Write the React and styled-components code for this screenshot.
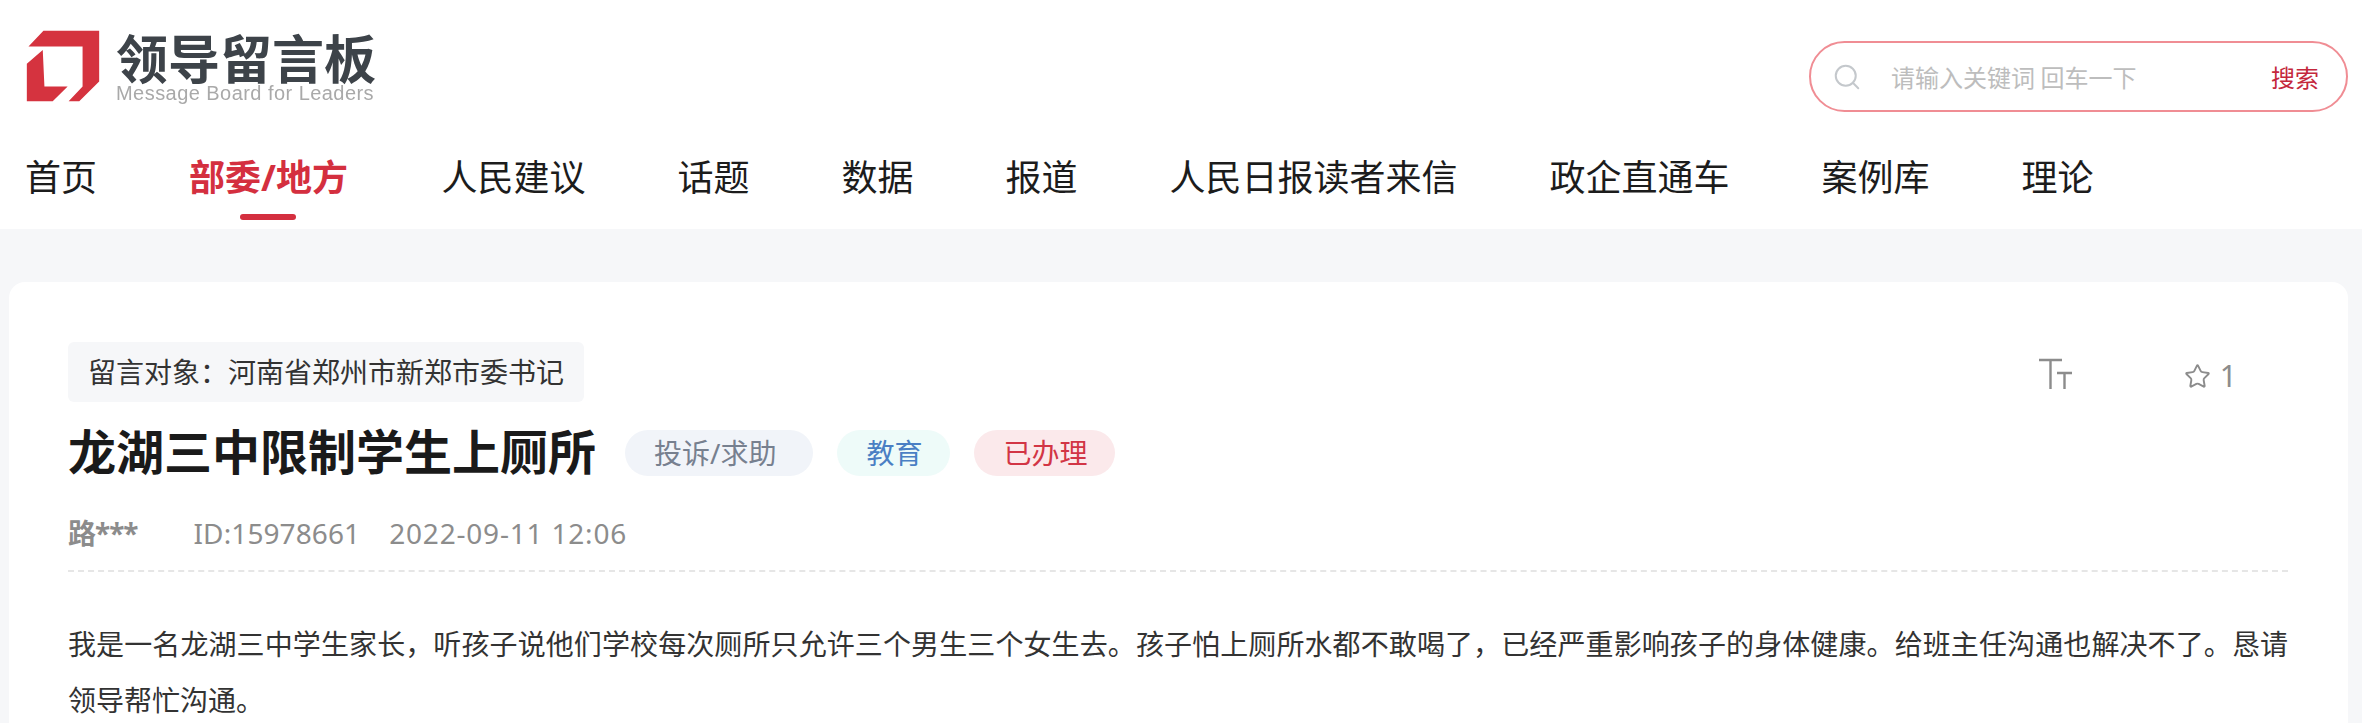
import React from "react";
import styled, { createGlobalStyle } from "styled-components";
import { Search, Star } from "lucide-react";

const Global = createGlobalStyle`
  html, body { margin: 0; padding: 0; height: 723px; overflow: hidden; background: #f6f7f9; }
  body { font-family: "Noto Sans", "Noto Sans CJK SC", sans-serif; }
  * { box-sizing: border-box; }
`;

const Page = styled.div`
  width: 2362px;
  height: 723px;
  overflow: hidden;
`;
const Header = styled.header`
  height: 229px;
  background: #fff;
  padding: 30px 14px 0 25px;
`;
const TopRow = styled.div`
  display: flex;
  justify-content: space-between;
  align-items: flex-start;
  height: 123px;
`;
const Logo = styled.div`
  display: flex;
  align-items: flex-start;
  gap: 16px;
  margin-left: 1px;
  filter: blur(0.4px);
`;
const LogoWords = styled.div`
  display: flex;
  flex-direction: column;
  width: 260px;
`;
const LogoTitle = styled.div`
  font: 700 52px/53px "Noto Sans CJK SC", sans-serif;
  color: #3d4349;
  white-space: nowrap;
`;
const LogoSub = styled.div`
  font: 400 20px/20px "Liberation Sans", sans-serif;
  color: #a9a9a9;
  white-space: nowrap;
  letter-spacing: 0.45px;
`;
const SearchBox = styled.div`
  width: 539px;
  height: 71px;
  margin-top: 11px;
  border: 2px solid #f08d94;
  border-radius: 36px;
  display: flex;
  align-items: center;
  padding: 0 27px 0 21px;
  font: 400 24px/30px "Noto Sans CJK SC", sans-serif;
`;
const Placeholder = styled.span`
  margin-left: 29px;
  color: #bdbdbd;
  flex: 1;
`;
const SearchBtn = styled.span`
  color: #c4283c;
`;
const Nav = styled.nav`
  display: flex;
  gap: 92px;
`;
const NavItem = styled.a`
  position: relative;
  font: ${(p) => (p.$active ? 700 : 400)} 36px/50px "Noto Sans", "Noto Sans CJK SC", sans-serif;
  color: ${(p) => (p.$active ? "#d42f3f" : "#1c1c1c")};
  white-space: nowrap;
  ${(p) =>
    p.$active &&
    `margin-right: 1.5px;
    &::after {
      content: "";
      position: absolute;
      left: 50%;
      bottom: -17px;
      width: 56px;
      height: 6px;
      margin-left: -28px;
      border-radius: 3px;
      background: #d42f3f;
    }`}
`;
const Card = styled.main`
  margin: 53px 14px 0 9px;
  padding: 60px 60px 0 59px;
  background: #fff;
  border-radius: 16px;
  height: 600px;
`;
const TargetRow = styled.div`
  display: flex;
  justify-content: space-between;
  align-items: center;
  height: 60px;
`;
const Target = styled.div`
  height: 60px;
  padding: 0 20px;
  background: #f6f7f9;
  border-radius: 6px;
  font-size: 28px;
  line-height: 60px;
  color: #333;
  white-space: nowrap;
`;
const Tools = styled.div`
  display: flex;
  align-items: center;
  color: #8c8c8c;
  margin-right: 51px;
  margin-top: 8px;
`;
const FontSizeIcon = styled.svg`
  width: 34px;
  height: 32px;
  margin: 0 111px 5px 0;
`;
const Count = styled.span`
  font-size: 30px;
  line-height: 36px;
  margin-left: 9px;
`;
const TitleRow = styled.div`
  display: flex;
  align-items: center;
  margin-top: 20px;
  height: 60px;
`;
const Title = styled.h1`
  margin: 0 29px 6px 0;
  font: 700 48px/60px "Noto Sans CJK SC", sans-serif;
  color: #1a1a1a;
  white-space: nowrap;
`;
const Chip = styled.span`
  height: 46px;
  padding: 0 ${(p) => p.$padEnd || 29}px 0 29px;
  margin: 2px 24px 0 0;
  border-radius: 23px;
  background: ${(p) => p.$bg};
  color: ${(p) => p.$fg};
  font-size: 28px;
  line-height: 46px;
  white-space: nowrap;
`;
const Meta = styled.div`
  display: flex;
  align-items: center;
  margin-top: 31px;
  height: 40px;
  font-size: 28px;
  line-height: 40px;
  color: #8c8c8c;
  white-space: nowrap;
`;
const Author = styled.b`
  font-weight: 700;
  letter-spacing: -1px;
  margin-right: 56px;
`;
const MetaId = styled.span`
  margin-right: 29px;
  letter-spacing: 0.1px;
`;
const MetaDate = styled.span`
  letter-spacing: 0.8px;
`;
const Divider = styled.div`
  margin-top: 17px;
  border-top: 2px dashed #e6e6e6;
`;
const Body = styled.p`
  margin: 44px 0 0;
  font-size: 28px;
  line-height: 56px;
  color: #333;
  text-align: justify;
`;

const navItems = ["首页", "部委/地方", "人民建议", "话题", "数据", "报道", "人民日报读者来信", "政企直通车", "案例库", "理论"];

export default function App() {
  return (
    <Page>
      <Global />
      <Header>
        <TopRow>
          <Logo>
            <svg width="74" height="72" viewBox="80 88 222 217" fill="#d5333f">
              <path d="M300 90 L132 90 L87 138 L250 138 L250 258 L208 303 L240 303 L300 243 Z" />
              <path d="M130 148 L82 190 L82 303 L160 303 L205 258 L135 258 Z" />
            </svg>
            <LogoWords>
              <LogoTitle>领导留言板</LogoTitle>
              <LogoSub>Message Board for Leaders</LogoSub>
            </LogoWords>
          </Logo>
          <SearchBox>
            <Search size={30} color="#c4c8cc" strokeWidth={1.6} />
            <Placeholder>请输入关键词 回车一下</Placeholder>
            <SearchBtn>搜索</SearchBtn>
          </SearchBox>
        </TopRow>
        <Nav>
          {navItems.map((n) => (
            <NavItem key={n} $active={n === "部委/地方"}>{n}</NavItem>
          ))}
        </Nav>
      </Header>
      <Card>
        <TargetRow>
          <Target>留言对象：河南省郑州市新郑市委书记</Target>
          <Tools>
            <FontSizeIcon viewBox="0 0 34 32" fill="none" stroke="#8c8c8c">
              <path d="M0 2 H23 M11.5 2 V31" strokeWidth="2.4" />
              <path d="M18 15 H33 M25.5 15 V31" strokeWidth="2.4" />
            </FontSizeIcon>
            <Star size={27} strokeWidth={1.7} color="#8c8c8c" />
            <Count>1</Count>
          </Tools>
        </TargetRow>
        <TitleRow>
          <Title>龙湖三中限制学生上厕所</Title>
          <Chip $bg="#f1f4f9" $fg="#77808f" $padEnd={37}>投诉/求助</Chip>
          <Chip $bg="#eefbf9" $fg="#4a7fc4" $padEnd={28}>教育</Chip>
          <Chip $bg="#fbe9eb" $fg="#d23545" $padEnd={28}>已办理</Chip>
        </TitleRow>
        <Meta>
          <Author>路***</Author>
          <MetaId>ID:15978661</MetaId>
          <MetaDate>2022-09-11 12:06</MetaDate>
        </Meta>
        <Divider />
        <Body>我是一名龙湖三中学生家长，听孩子说他们学校每次厕所只允许三个男生三个女生去。孩子怕上厕所水都不敢喝了，已经严重影响孩子的身体健康。给班主任沟通也解决不了。恳请领导帮忙沟通。</Body>
      </Card>
    </Page>
  );
}
